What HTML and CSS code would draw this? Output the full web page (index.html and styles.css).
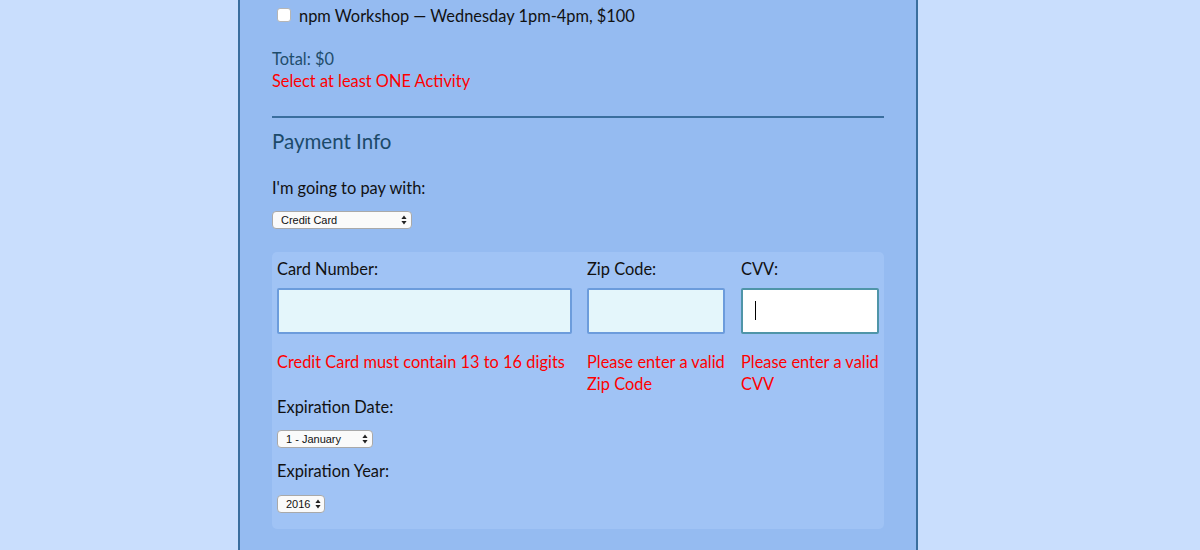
FILE: index.html
```html
<!DOCTYPE html>
<html>
<head>
<meta charset="utf-8">
<link rel="stylesheet" href="styles.css">
</head>
<body>
<main class="panel">
  <label class="activity"><input type="checkbox" class="check"> npm Workshop — Wednesday 1pm-4pm, $100</label>
  <p class="total">Total: $0</p>
  <p class="error">Select at least ONE Activity</p>
  <hr class="rule">
  <h3 class="legend">Payment Info</h3>
  <p class="label">I'm going to pay with:</p>
  <span class="sel sel-pay"><select><option>Credit Card</option></select><svg class="arr" width="6" height="10" viewBox="0 0 6 10"><path d="M3 0.5 L5.6 4 H0.4Z M3 9.5 L5.6 6 H0.4Z" fill="#222"/></svg></span>
  <section class="card">
    <div class="fields">
      <div class="field">
        <p class="label">Card Number:</p>
        <input class="txt" type="text">
        <p class="error err-field">Credit Card must contain 13 to 16 digits</p>
      </div>
      <div class="field field-zip">
        <p class="label">Zip Code:</p>
        <input class="txt" type="text">
        <p class="error err-field">Please enter a valid Zip Code</p>
      </div>
      <div class="field">
        <p class="label">CVV:</p>
        <span class="focuswrap"><input class="txt txt-focus" type="text"><span class="caret"></span></span>
        <p class="error err-field">Please enter a valid CVV</p>
      </div>
    </div>
    <p class="label exp-label">Expiration Date:</p>
    <span class="sel sel-month"><select><option>1 - January</option></select><svg class="arr" width="6" height="10" viewBox="0 0 6 10"><path d="M3 0.5 L5.6 4 H0.4Z M3 9.5 L5.6 6 H0.4Z" fill="#222"/></svg></span>
    <p class="label exp-label2">Expiration Year:</p>
    <span class="sel sel-year"><select><option>2016</option></select><svg class="arr" width="6" height="10" viewBox="0 0 6 10"><path d="M3 0.5 L5.6 4 H0.4Z M3 9.5 L5.6 6 H0.4Z" fill="#222"/></svg></span>
  </section>
</main>
</body>
</html>
```
FILE: styles.css
```css
html, body {
  margin: 0;
  padding: 0;
  background: #c9defd;
  height: 550px;
  overflow: hidden;
}
body {
  font-family: "Lato", "Noto Sans", sans-serif;
  font-size: 16.4px;
  line-height: 22px;
  color: #111;
}
.panel {
  width: 612px;
  margin: 0 0 0 238px;
  padding: 5px 32px 0;
  height: 545px;
  background: #95bbf1;
  border-left: 2px solid #3a6e9e;
  border-right: 2px solid #3a6e9e;
}
p { margin: 0; }
.activity {
  display: flex;
  align-items: center;
  height: 22px;
  padding-left: 5px;
  color: #111;
}
.check {
  appearance: none;
  -webkit-appearance: none;
  width: 14px;
  height: 14px;
  margin: -2px 8px 0 0;
  background: #fff;
  border: 1px solid #b5b5b5;
  border-radius: 3px;
}
.total {
  margin-top: 21px;
  color: #1f4d6c;
}
.error { color: #ff0000; }
.rule {
  margin: 24px 0 0;
  border: 0;
  height: 2px;
  background: #3a6e9e;
}
.legend {
  margin: 10px 0 0;
  font-size: 20.5px;
  line-height: 26px;
  font-weight: normal;
  color: #1c4a6a;
}
.panel > .label { margin-top: 23px; }
.sel {
  position: relative;
  display: block;
  height: 18px;
}
.sel select {
  display: block;
  appearance: none;
  -webkit-appearance: none;
  height: 18px;
  margin: 0;
  padding: 0 0 0 8px;
  font-family: "Liberation Sans", Arial, sans-serif;
  font-size: 11px;
  color: #111;
  background: #fafafa;
  border: 1px solid #a9a9a9;
  border-radius: 4px;
}
.sel .arr {
  position: absolute;
  top: 4px;
  pointer-events: none;
}
.sel-pay { margin-top: 12px; }
.sel-pay select { width: 140px; }
.sel-pay .arr { left: 129px; }
.sel-month select { width: 96px; }
.sel-month .arr { left: 85px; }
.sel-year select { width: 48px; padding-left: 8px; }
.sel-year .arr { left: 38px; }
.card {
  margin-top: 23px;
  background: #a0c3f5;
  border-radius: 5px;
  padding: 6px 5px 16px;
}
.fields {
  display: grid;
  grid-template-columns: 295px 139px 138px;
  column-gap: 15px;
}
.field-zip .txt { width: 138px; }
.txt {
  display: block;
  box-sizing: border-box;
  width: 100%;
  height: 46px;
  margin: 8px 0 0;
  background: #e4f6fb;
  border: 2px solid #6c9cdc;
  border-radius: 2px;
  outline: none;
}
.focuswrap {
  position: relative;
  display: block;
}
.txt-focus {
  background: #fff;
  border-color: #4f95a8;
}
.caret {
  position: absolute;
  left: 14px;
  top: 13px;
  width: 1px;
  height: 19px;
  background: #000;
}
.err-field { margin-top: 17px; }
.exp-label { margin-top: 1px; }
.sel-month { margin-top: 12px; }
.exp-label2 { margin-top: 12px; }
.sel-year { margin-top: 13px; }
```
